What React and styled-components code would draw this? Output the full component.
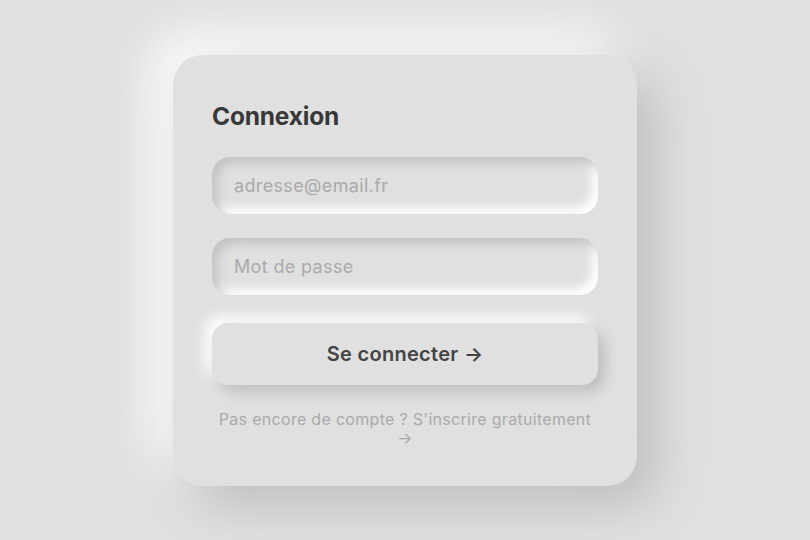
import styled, { createGlobalStyle } from "styled-components"

const Global = createGlobalStyle`
    html, body {
        margin: 0;
        padding: 0;
        background: #e0e0e0;
        font-family: Inter, "Noto Sans", sans-serif;
    }
    * { box-sizing: border-box; }
`
const Page = styled.div`
    min-height: 100vh;
    display: flex;
    align-items: center;
    justify-content: center;
`
const Card = styled.div`
    width: 464px;
    padding: 46px 39px 38px;
    border-radius: 30px;
    background: #e0e0e0;
    box-shadow: 20px 20px 50px #bebebe, -20px -20px 50px #ffffff;
`
const Title = styled.h2`
    margin: 0 0 26px;
    font-size: 24.5px;
    line-height: 30px;
    font-weight: 700;
    color: #383838;
    letter-spacing: -0.2px;
`
const Form = styled.form`
    display: flex;
    flex-direction: column;
    gap: 24px;
`
const Input = styled.input`
    height: 57px;
    border: none;
    outline: none;
    border-radius: 18px;
    padding: 0 22px;
    background: #e0e0e0;
    box-shadow: inset 6px 6px 10px #c4c4c4, inset -6px -6px 10px #ffffff;
    font-family: inherit;
    font-size: 18px;
    letter-spacing: 0.35px;
    color: #444;

    &::placeholder {
        color: #aaa;
    }
`
const Button = styled.button`
    margin-top: 4px;
    height: 62px;
    border: none;
    border-radius: 16px;
    background: #e0e0e0;
    box-shadow: 7px 7px 14px #bebebe, -7px -7px 14px #ffffff;
    font-family: inherit;
    font-size: 20px;
    font-weight: 600;
    letter-spacing: 0.3px;
    color: #444;
    cursor: pointer;
`
const Footer = styled.p`
    margin: 25px 0 0;
    text-align: center;
    font-size: 16px;
    line-height: 19px;
    letter-spacing: 0.3px;
    color: #aaa;
`

export default function App() {
    return (
        <>
            <Global />
            <Page>
                <Card>
                    <Title>Connexion</Title>
                    <Form onSubmit={(e) => e.preventDefault()}>
                        <Input type="email" placeholder="adresse@email.fr" />
                        <Input type="password" placeholder="Mot de passe" />
                        <Button type="submit">Se connecter →</Button>
                    </Form>
                    <Footer>Pas encore de compte ? S'inscrire gratuitement →</Footer>
                </Card>
            </Page>
        </>
    )
}
